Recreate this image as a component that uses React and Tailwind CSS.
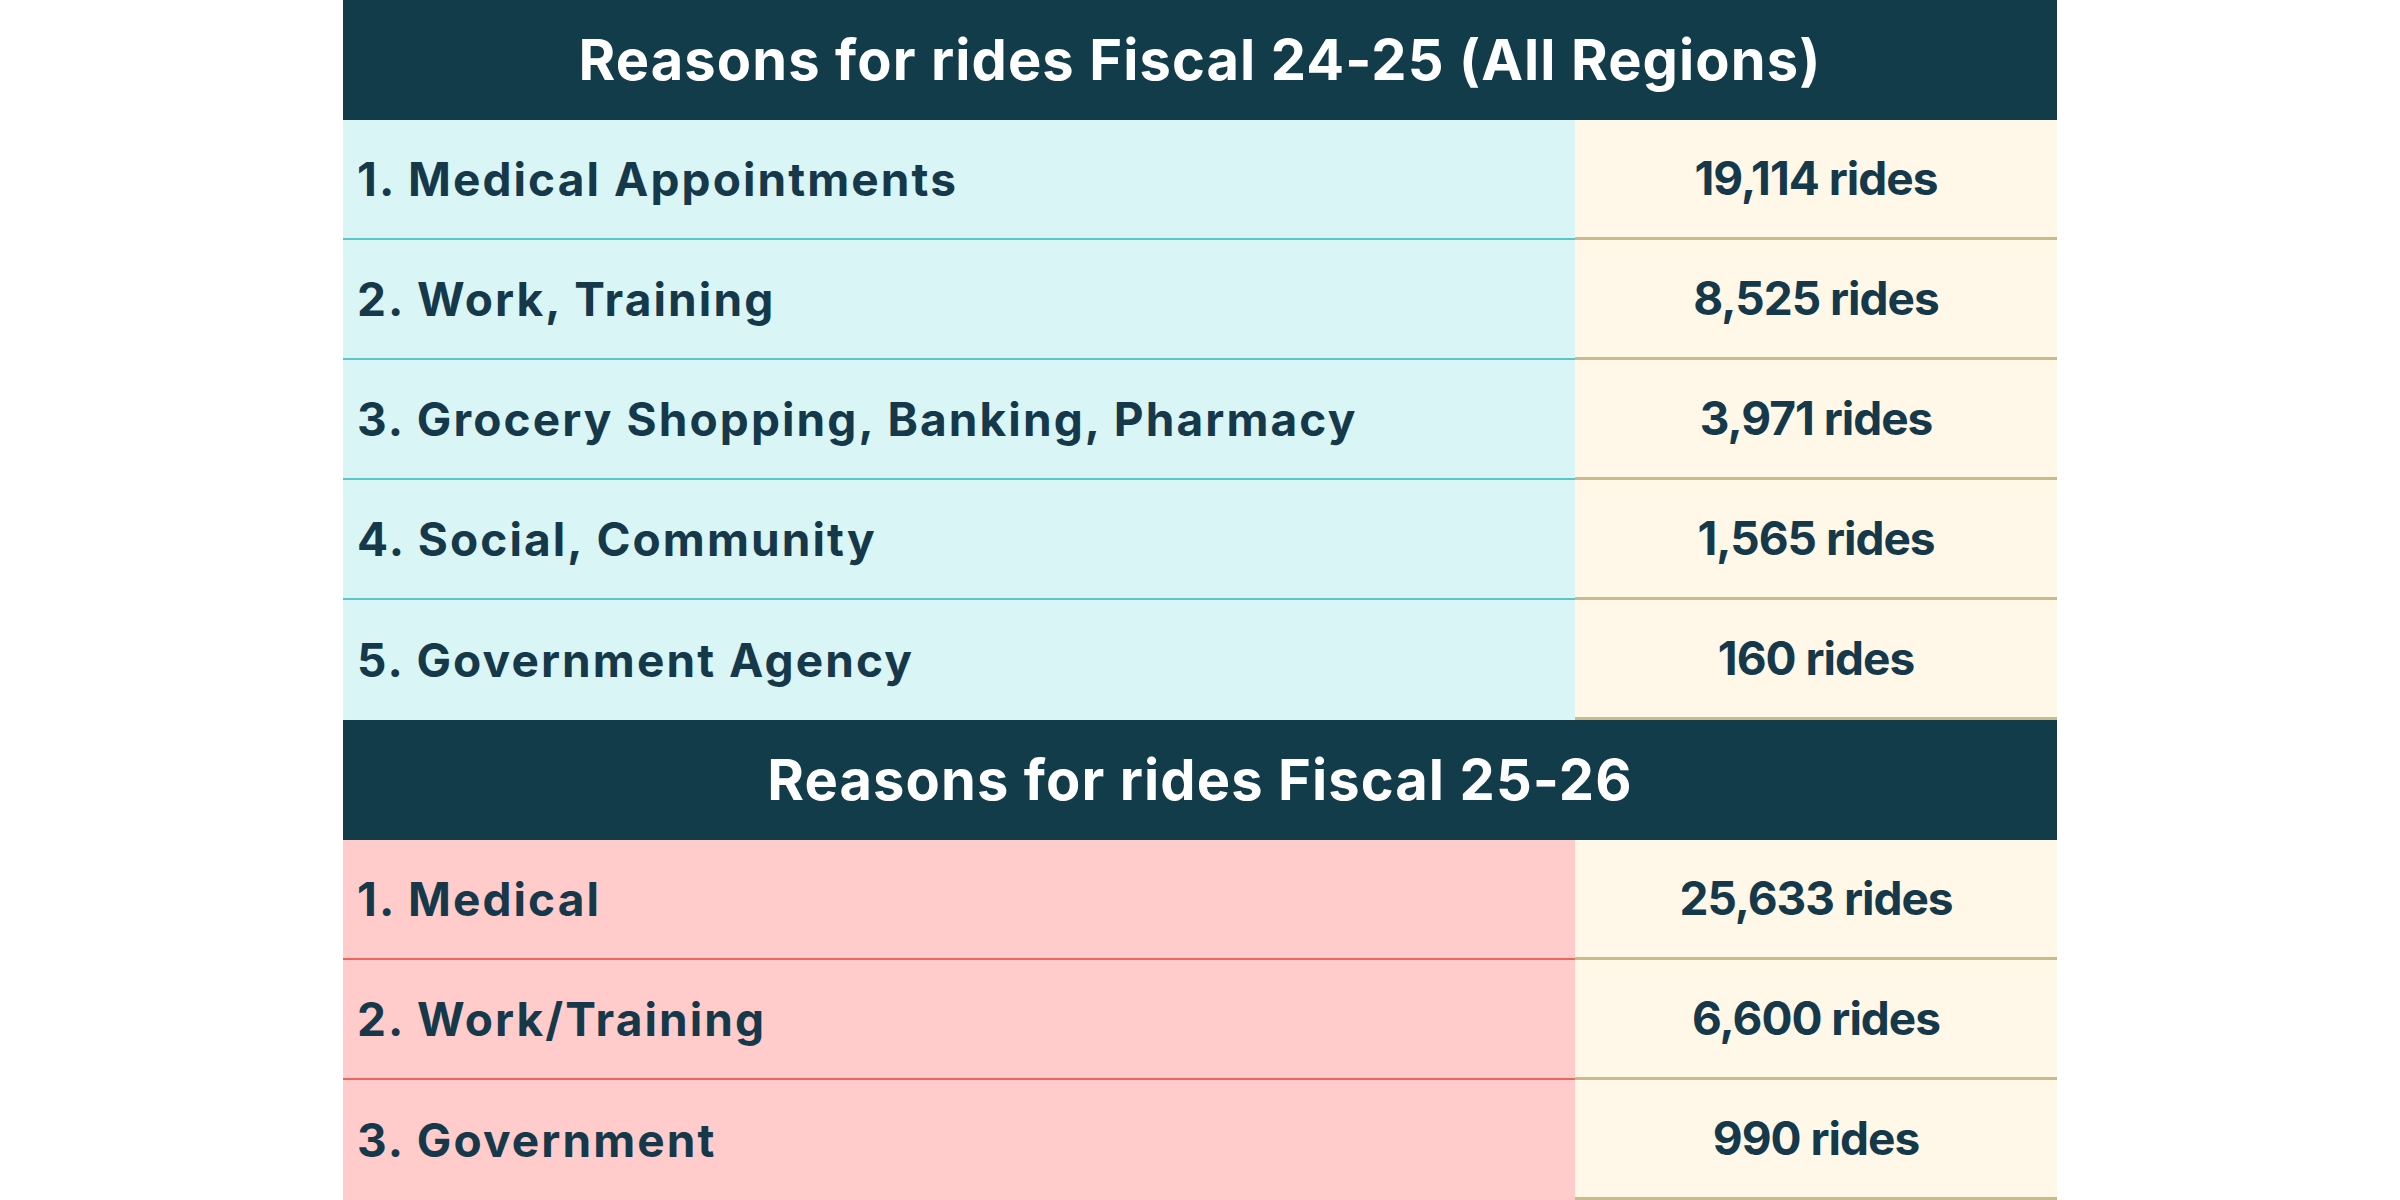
import React from "react";

const first = [
  ["1. Medical Appointments", "19,114 rides"],
  ["2. Work, Training", "8,525 rides"],
  ["3. Grocery Shopping, Banking, Pharmacy", "3,971 rides"],
  ["4. Social, Community", "1,565 rides"],
  ["5. Government Agency", "160 rides"],
];

const second = [
  ["1. Medical", "25,633 rides"],
  ["2. Work/Training", "6,600 rides"],
  ["3. Government", "990 rides"],
];

const Header = ({ children }) => (
  <div className="h-[120px] bg-[#133c4a] flex items-center justify-center text-white text-[56px] font-bold tracking-[1.1px]">
    {children}
  </div>
);

const Row = ({ label, value, tone, last }) => {
  const left =
    tone === "cyan"
      ? "bg-[#daf5f6] border-[#5cc6c6]"
      : "bg-[#ffcccb] border-[#ec6660]";
  return (
    <div className="h-[120px] flex">
      <div
        className={`w-[1232px] flex items-center pl-[14px] tracking-[2.1px] ${left} ${
          last ? "border-b-0" : "border-b-2"
        }`}
      >
        {label}
      </div>
      <div className="flex-1 flex items-center justify-center bg-[#fff8e8] border-b-[3px] border-[#cbbb8c] tracking-[-1px]">
        {value}
      </div>
    </div>
  );
};

const App = () => {
  return (
    <div
      className="w-[2400px] h-[1200px] bg-white flex justify-center overflow-hidden"
      style={{ fontFamily: "Inter, 'Noto Sans', sans-serif" }}
    >
      <div className="w-[1714px] flex flex-col text-[#15394a] text-[46px] font-bold">
        <Header>Reasons for rides Fiscal 24-25 (All Regions)</Header>
        {first.map(([l, v], i) => (
          <Row key={l} label={l} value={v} tone="cyan" last={i === first.length - 1} />
        ))}
        <Header>Reasons for rides Fiscal 25-26</Header>
        {second.map(([l, v], i) => (
          <Row key={l} label={l} value={v} tone="pink" last={i === second.length - 1} />
        ))}
      </div>
    </div>
  );
};

export default App;
